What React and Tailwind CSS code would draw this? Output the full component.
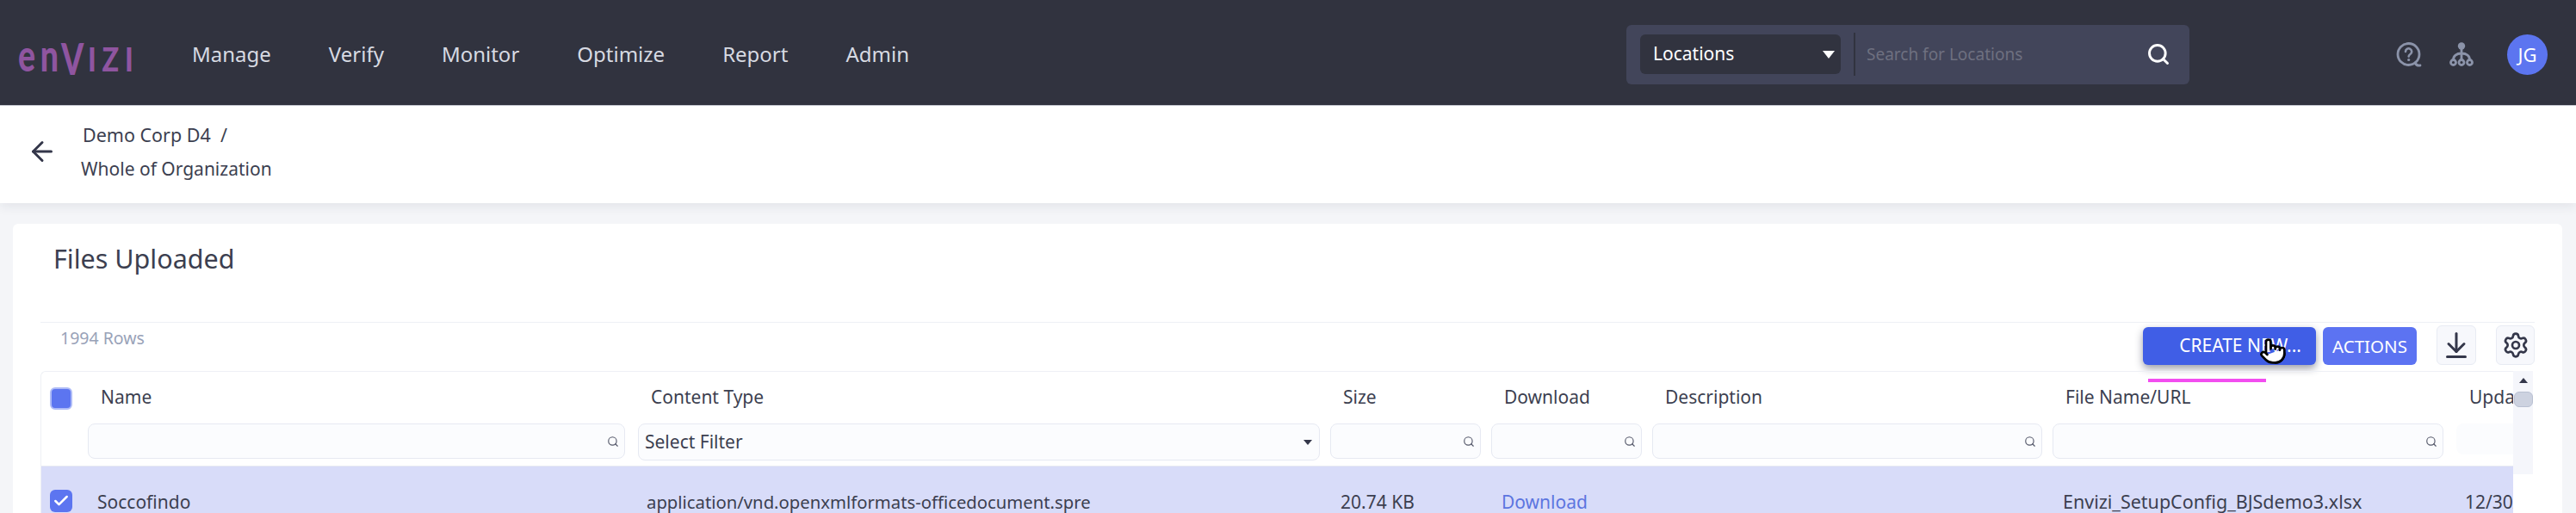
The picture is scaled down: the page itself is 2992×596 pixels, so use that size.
import React from "react";
import { ArrowDownToLine, ArrowLeft, Check, Pointer, Search, Settings } from "lucide-react";

const navItems = ["Manage", "Verify", "Monitor", "Optimize", "Report", "Admin"];
const gridCols = "grid grid-cols-[42px_627px_792px_175px_175px_453px_457px_200px] gap-x-[12px]";

const FilterBox = ({ className = "" }) => (
  <div className={`flex h-[41px] items-center justify-end rounded-[8px] border border-[#e6e9f2] bg-[#fbfcfe] pr-[6px] ${className}`}>
    <Search size={14} strokeWidth={2} className="text-[#55596b]" />
  </div>
);

const HelpIcon = () => (
  <svg width="31" height="31" viewBox="0 0 31 31" fill="none" className="text-[#8b93a9]">
    <circle cx="14.500" cy="15" r="12.500" stroke="currentColor" strokeWidth="2.800" />
    <path d="M22 25c1 2 3 3.500 6 3" stroke="currentColor" strokeWidth="2.800" strokeLinecap="round" />
    <path d="M11 12a3.600 3.600 0 1 1 5.500 3c-1.200.8-1.800 1.400-1.800 2.600" stroke="currentColor" strokeWidth="2.600" strokeLinecap="round" />
    <circle cx="14.700" cy="21.500" r="1.600" fill="currentColor" />
  </svg>
);

const OrgIcon = () => (
  <svg width="28" height="28" viewBox="0 0 28 28" fill="none" className="text-[#8b93a9]">
    <circle cx="14" cy="4.500" r="4.200" fill="currentColor" />
    <path d="M14 8v13M14 13c-6 0-9.500 3-9.500 7.500M14 13c6 0 9.500 3 9.500 7.500" stroke="currentColor" strokeWidth="2.800" />
    <circle cx="4.500" cy="23.500" r="3" stroke="currentColor" strokeWidth="2.800" />
    <circle cx="14" cy="23.500" r="3" stroke="currentColor" strokeWidth="2.800" />
    <circle cx="23.500" cy="23.500" r="3" stroke="currentColor" strokeWidth="2.800" />
  </svg>
);

const Logo = () => (
  <div className="flex w-[202px] items-baseline font-['Lato',sans-serif] font-black leading-none text-[#8f55a0]">
    <span className="inline-block w-[50px] origin-left scale-x-[0.72] text-[52px] tracking-[8px]">en</span>
    <span className="inline-block w-[31px] origin-left translate-y-[4px] scale-x-[0.72] text-[52px]">V</span>
    <span className="inline-block origin-left scale-x-[0.85] text-[38px] tracking-[8px]">IZI</span>
  </div>
);

const TopBar = () => (
  <header className="flex h-[123px] items-center border-b border-[#c9cbd3] bg-[#31333f] pl-[21px] pt-[4px]">
    <Logo />
    <nav className="flex gap-[67px]">
      {navItems.map((item) => (
        <a key={item} className="text-[24px] text-[#d7dae2]">{item}</a>
      ))}
    </nav>
    <div className="ml-[833px] flex h-[69px] w-[654px] items-center rounded-[6px] bg-[#42455a] pl-[16px] pr-[22px]">
      <div className="flex h-[46px] w-[233px] items-center justify-between rounded-[6px] bg-[#31333f] pl-[15px] pr-[7px]">
        <span className="text-[21px] text-white">Locations</span>
        <span className="h-0 w-0 border-x-[7px] border-t-[9px] border-x-transparent border-t-white" />
      </div>
      <div className="ml-[15px] h-[50px] w-[2px] bg-[#31333f]" />
      <span className="ml-[13px] flex-1 text-[19px] text-[#6e7080]">Search for Locations</span>
      <Search size={28} strokeWidth={2.5} className="text-white" />
    </div>
    <div className="ml-[240px] flex items-center">
      <HelpIcon />
      <div className="ml-[31px]"><OrgIcon /></div>
      <div className="ml-[39px] flex h-[47px] w-[47px] items-center justify-center rounded-full bg-[#5c75f0] text-[22px] text-white">JG</div>
    </div>
  </header>
);

const Breadcrumb = () => (
  <section className="relative flex h-[113px] items-center bg-white pb-[7px] pl-[31px] shadow-[0_4px_12px_rgba(30,35,60,0.08)]">
    <ArrowLeft size={36} strokeWidth={2} className="text-[#34374a]" />
    <div className="ml-[27px] flex flex-col gap-[17px] leading-[23px] text-[#3c3f50]">
      <span className="pl-[2px] text-[21.500px]">Demo Corp D4&nbsp; /</span>
      <span className="text-[21px]">Whole of Organization</span>
    </div>
  </section>
);

const Toolbar = () => (
  <div className="flex h-[57px] items-start border-t border-[#eef0f5]">
    <span className="mt-[6px] pl-[23px] text-[19.500px] leading-[24px] text-[#99a2b8]">1994 Rows</span>
    <div className="ml-auto mt-[5px] flex items-start">
      <button className="flex h-[44px] w-[201px] items-center justify-end rounded-[6px] bg-[#405ee6] pr-[17px] text-[21px] text-white shadow-[0_4px_10px_rgba(30,35,60,0.45)]">
        CREATE NEW...
      </button>
      <button className="ml-[8px] flex h-[44px] w-[109px] items-center justify-center rounded-[6px] bg-[#5c73f2] text-[20.500px] text-white">
        ACTIONS
      </button>
      <button className="ml-[23px] -mt-[2px] flex h-[46px] w-[46px] items-center justify-center rounded-[6px] border border-[#e8ebf3] bg-[#f7f8fc]">
        <ArrowDownToLine size={36} strokeWidth={2} className="text-[#34374a]" />
      </button>
      <button className="ml-[23px] -mt-[2px] flex h-[46px] w-[45px] items-center justify-center rounded-[6px] border border-[#e8ebf3] bg-[#f7f8fc]">
        <Settings size={32} strokeWidth={2} className="text-[#34374a]" />
      </button>
    </div>
  </div>
);

const Table = () => (
  <div className="flex">
    <div className="relative w-[2872px] overflow-hidden rounded-tl-[6px] border-l border-t border-[#eef0f5]">
      <div className={`${gridCols} h-[109px] grid-rows-[60px_41px] text-[21px] text-[#3c3f50]`}>
        <div className="flex items-center pl-[10px] pt-[1px]">
          <div className="h-[26px] w-[26px] rounded-[6px] border-[2px] border-[#aebbf7] bg-[#5c75f0]" />
        </div>
        {["Name", "Content Type", "Size", "Download", "Description", "File Name/URL", "Updated"].map((label) => (
          <div key={label} className="flex items-center whitespace-nowrap pl-[15px]">{label}</div>
        ))}
        <div />
        <FilterBox className="w-[624px]" />
        <div className="flex h-[43px] w-[792px] items-center justify-between rounded-[8px] border border-[#e6e9f2] bg-[#fbfcfe] pl-[7px] pr-[8px]">
          <span>Select Filter</span>
          <span className="h-0 w-0 border-x-[5px] border-t-[6px] border-x-transparent border-t-[#34374a]" />
        </div>
        <FilterBox />
        <FilterBox />
        <FilterBox />
        <FilterBox className="w-[454px]" />
        <div className="h-[36px] rounded-[8px] bg-[#fbfcfe]" />
      </div>
      <div className={`${gridCols} h-[80px] items-center border-t border-[#e6e9f2] bg-[#d8dcf9] text-[21px] text-[#3c3f50]`}>
        <div className="pl-[10px]">
          <div className="flex h-[26px] w-[26px] items-center justify-center rounded-[6px] bg-[#5c75f0]">
            <Check size={20} strokeWidth={3} className="text-white" />
          </div>
        </div>
        <div className="pl-[11px] pt-1">Soccofindo</div>
        <div className="whitespace-nowrap pl-[10px] pt-1 text-[20.300px]">application/vnd.openxmlformats-officedocument.spre</div>
        <div className="pl-3 pt-1">20.74 KB</div>
        <div className="pl-3 pt-1 text-[#5c75e0]">Download</div>
        <div />
        <div className="pl-3 pt-1 text-[21.500px]">Envizi_SetupConfig_BJSdemo3.xlsx</div>
        <div className="pl-[10px] pt-1">12/30/2021</div>
      </div>
      <div className="absolute left-[2447px] top-[8px] h-[4px] w-[137px] bg-[#f24df0]" />
    </div>
    <div className="flex h-[120px] w-[23px] flex-col items-center bg-[#f5f6fb] pt-[8px]">
      <span className="h-0 w-0 border-x-[5px] border-b-[6px] border-x-transparent border-b-[#34374a]" />
      <div className="mt-[10px] h-[18px] w-[22px] rounded-[6px] border border-[#b9c0d2] bg-[#cdd2e0]" />
    </div>
  </div>
);

export default function App() {
  return (
    <div className="relative h-[596px] w-[2992px] overflow-hidden bg-[#f4f5f8] font-['Noto_Sans',sans-serif]">
      <TopBar />
      <Breadcrumb />
      <main className="ml-[15px] mr-[16px] mt-[24px] rounded-t-[6px] bg-white px-[32px]">
        <h1 className="h-[114px] pl-[15px] pt-[22px] text-[30.500px] font-normal leading-[36px] text-[#3c3f50]">Files Uploaded</h1>
        <Toolbar />
        <Table />
      </main>
      <Pointer size={32} strokeWidth={2} fill="white" className="absolute left-[2624px] top-[392px] text-black" />
    </div>
  );
}
